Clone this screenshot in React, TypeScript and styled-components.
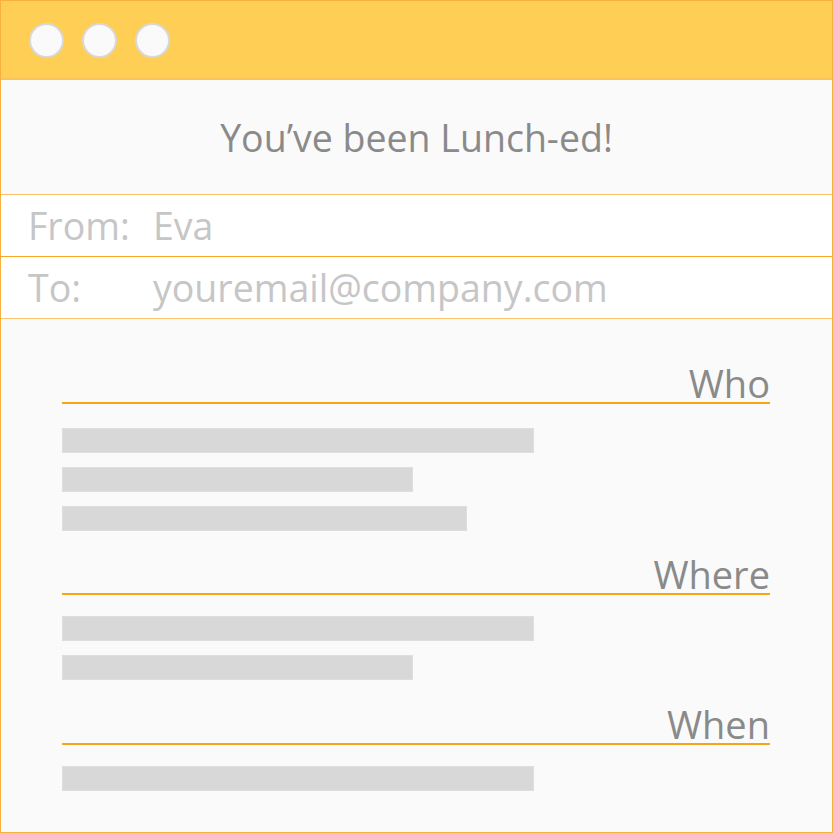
import React from "react";
import styled, { createGlobalStyle } from "styled-components";

const GlobalStyle = createGlobalStyle`
  html, body {
    margin: 0;
    padding: 0;
    background: #fafafa;
  }
  * {
    box-sizing: border-box;
  }
`;

const Frame = styled.div`
  width: 833px;
  height: 833px;
  border: 1px solid #f8b040;
  background: #fafafa;
  font-family: "Open Sans", "Noto Sans", sans-serif;
  display: flex;
  flex-direction: column;
  overflow: hidden;
`;

const TitleBar = styled.div`
  height: 79px;
  flex-shrink: 0;
  background: #ffce55;
  border-bottom: 2px solid #fcc35a;
  display: flex;
  align-items: center;
  gap: 18px;
  padding: 1px 0 0 28px;
`;

const WindowDot = styled.span`
  width: 35px;
  height: 35px;
  border-radius: 50%;
  background: #fafafa;
  border: 2px solid #d8d8d8;
`;

const Subject = styled.div`
  height: 114px;
  flex-shrink: 0;
  display: flex;
  align-items: center;
  justify-content: center;
  font-size: 37.5px;
  color: #8a8a8a;
`;

const Field = styled.div<{ $divider: string }>`
  height: 62px;
  flex-shrink: 0;
  display: flex;
  align-items: center;
  background: #ffffff;
  border-top: 1px solid ${(p) => p.$divider};
  padding: 0 0 0 27px;
  font-size: 37.5px;
  color: #c6c6c6;
`;

const FieldLabel = styled.span`
  width: 125px;
  flex-shrink: 0;
`;

const Body = styled.div`
  flex: 1;
  border-top: 1px solid #fcc36a;
  padding: 45px 62px 0 61px;
`;

const Section = styled.section<{ $top: number }>`
  margin-top: ${(p) => p.$top}px;
`;

const Heading = styled.div<{ $gap: number }>`
  font-size: 38px;
  line-height: 38px;
  color: #8a8a8a;
  text-align: right;
  border-bottom: 2px solid #f5a613;
  margin-bottom: ${(p) => p.$gap}px;
`;

const Lines = styled.div`
  display: flex;
  flex-direction: column;
  gap: 14px;
`;

const Placeholder = styled.div<{ $width: number }>`
  width: ${(p) => p.$width}px;
  height: 25px;
  background: #d8d8d8;
  border: 1px solid #dedede;
`;

const sections = [
  { title: "Who", top: 0, gap: 24, bars: [472, 351, 405] },
  { title: "Where", top: 24, gap: 21, bars: [472, 351] },
  { title: "When", top: 25, gap: 21, bars: [472] },
];

export default function App() {
  return (
    <>
      <GlobalStyle />
      <Frame>
        <TitleBar>
          <WindowDot />
          <WindowDot />
          <WindowDot />
        </TitleBar>
        <Subject>You’ve been Lunch-ed!</Subject>
        <Field $divider="#fcc36a">
          <FieldLabel>From:</FieldLabel>
          <span>Eva</span>
        </Field>
        <Field $divider="#f9a826">
          <FieldLabel>To:</FieldLabel>
          <span>youremail@company.com</span>
        </Field>
        <Body>
          {sections.map((s) => (
            <Section key={s.title} $top={s.top}>
              <Heading $gap={s.gap}>{s.title}</Heading>
              <Lines>
                {s.bars.map((w, i) => (
                  <Placeholder key={i} $width={w} />
                ))}
              </Lines>
            </Section>
          ))}
        </Body>
      </Frame>
    </>
  );
}
